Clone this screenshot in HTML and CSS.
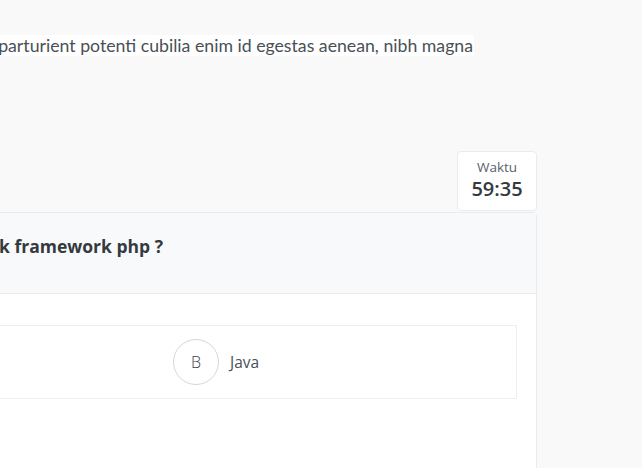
FILE: index.html
```html
<!DOCTYPE html>
<html lang="id">
<head>
<meta charset="utf-8">
<title>Ujian</title>
<link rel="stylesheet" href="styles.css">
</head>
<body>
<div class="page">
  <p class="intro"><span class="hl">Lorem ipsum dolor sit amet parturient potenti cubilia enim id egestas aenean, nibh magna</span></p>
  <div class="timer-row">
    <div class="timer">
      <div class="timer-label">Waktu</div>
      <div class="timer-value">59:35</div>
    </div>
  </div>
  <div class="card">
    <div class="card-header">
      <h5 class="question">Manakah yang termasuk framework php ?</h5>
    </div>
    <div class="card-body">
      <div class="option">
        <span class="opt-letter">B</span>
        <span class="opt-text">Java</span>
      </div>
    </div>
  </div>
</div>
</body>
</html>
```
FILE: styles.css
```css
html, body {
  margin: 0;
  padding: 0;
  background: #f9f9f9;
  overflow: hidden;
  height: 100%;
}
.page {
  margin-left: -300px;
  width: 837px;
  font-family: Lato, "Open Sans", sans-serif;
}
.intro {
  margin: 0;
  width: 774px;
  padding-top: 34px;
  font-size: 17.7px;
  line-height: 24px;
  color: #495057;
  text-align: right;
  white-space: nowrap;
}
.hl {
  background: #fff;
  padding: 0 1px 0 0;
}
.timer-row {
  display: flex;
  justify-content: flex-end;
  margin-top: 93px;
}
.timer {
  width: 78px;
  height: 58px;
  background: #fff;
  border: 1px solid #e9ecef;
  border-radius: 4px;
  text-align: center;
  color: #343a40;
}
.timer-label {
  font-family: "Open Sans", sans-serif;
  font-weight: 400;
  font-size: 13.5px;
  color: #5a6268;
  margin-top: 6px;
  line-height: 18px;
}
.timer-value {
  font-family: "Open Sans", sans-serif;
  font-size: 20px;
  line-height: 26px;
  font-weight: 600;
}
.card {
  margin-top: 1px;
  background: #fff;
  border: 1px solid #e9ecef;
  border-radius: 4px 4px 0 0;
  height: 400px;
}
.card-header {
  background: #f8f9fa;
  border-bottom: 1px solid #e9ecef;
  height: 81px;
  box-sizing: border-box;
  padding: 20px 0 0 0;
  white-space: nowrap;
}
.question {
  margin: 0;
  width: 462px;
  text-align: right;
  font-family: "Open Sans", sans-serif;
  font-weight: 700;
  font-size: 17.5px;
  line-height: 27px;
  color: #343a40;
}
.card-body {
  padding: 31px 19px 0 20px;
}
.option {
  display: flex;
  align-items: center;
  border: 1px solid #eeeeee;
  padding: 13px 0 13px 451px;
}
.opt-letter {
  width: 44px;
  height: 44px;
  border: 1px solid #d6d6d6;
  border-radius: 50%;
  display: flex;
  align-items: center;
  justify-content: center;
  font-family: "Open Sans", sans-serif;
  font-weight: 300;
  font-size: 16px;
  color: #3d434a;
}
.opt-text {
  margin-left: 11px;
  font-family: "Open Sans", sans-serif;
  font-weight: 400;
  font-size: 15.5px;
  color: #495057;
}
```
